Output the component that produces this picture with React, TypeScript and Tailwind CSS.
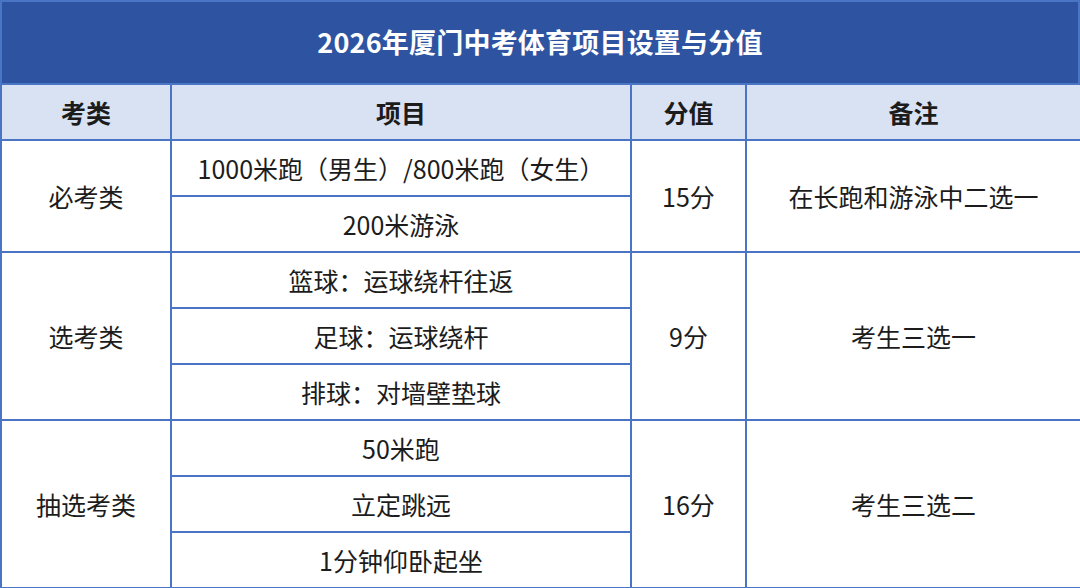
import React from "react";

const font = { fontFamily: '"Noto Sans CJK SC", "Noto Sans", sans-serif' };

type Group = { cat: string; items: string[]; score: string; note: string };

const groups: Group[] = [
  { cat: "必考类", items: ["1000米跑（男生）/800米跑（女生）", "200米游泳"], score: "15分", note: "在长跑和游泳中二选一" },
  { cat: "选考类", items: ["篮球：运球绕杆往返", "足球：运球绕杆", "排球：对墙壁垫球"], score: "9分", note: "考生三选一" },
  { cat: "抽选考类", items: ["50米跑", "立定跳远", "1分钟仰卧起坐"], score: "16分", note: "考生三选二" },
];

const cell = "border-2 border-[#4a75c5] text-center align-middle";

export default function App() {
  return (
    <div className="w-[1080px] h-[588px] bg-white text-[#1c1c1c] overflow-hidden" style={font}>
      <div className="border-2 border-b-0 border-[#4a75c5] h-[83px] bg-[#2e54a1] flex items-center justify-center">
        <h1 className="text-white text-[27px] font-bold tracking-[0.2px]">2026年厦门中考体育项目设置与分值</h1>
      </div>
      <table className="w-[1080px] table-fixed border-collapse text-[25px] leading-none">
        <colgroup>
          <col className="w-[170px]" />
          <col className="w-[460px]" />
          <col className="w-[115px]" />
          <col className="w-[335px]" />
        </colgroup>
        <thead>
          <tr className="h-[56px] bg-[#d9e2f3] font-bold">
            <th className={cell}>考类</th>
            <th className={cell}>项目</th>
            <th className={cell}>分值</th>
            <th className={cell}>备注</th>
          </tr>
        </thead>
        <tbody>
          {groups.map((g) =>
            g.items.map((item, i) => (
              <tr key={g.cat + item} className="h-[56px]">
                {i === 0 && (
                  <td rowSpan={g.items.length} className={cell}>
                    {g.cat}
                  </td>
                )}
                <td className={cell}>{item}</td>
                {i === 0 && (
                  <>
                    <td rowSpan={g.items.length} className={cell}>
                      {g.score}
                    </td>
                    <td rowSpan={g.items.length} className={cell}>
                      {g.note}
                    </td>
                  </>
                )}
              </tr>
            ))
          )}
        </tbody>
      </table>
    </div>
  );
}
